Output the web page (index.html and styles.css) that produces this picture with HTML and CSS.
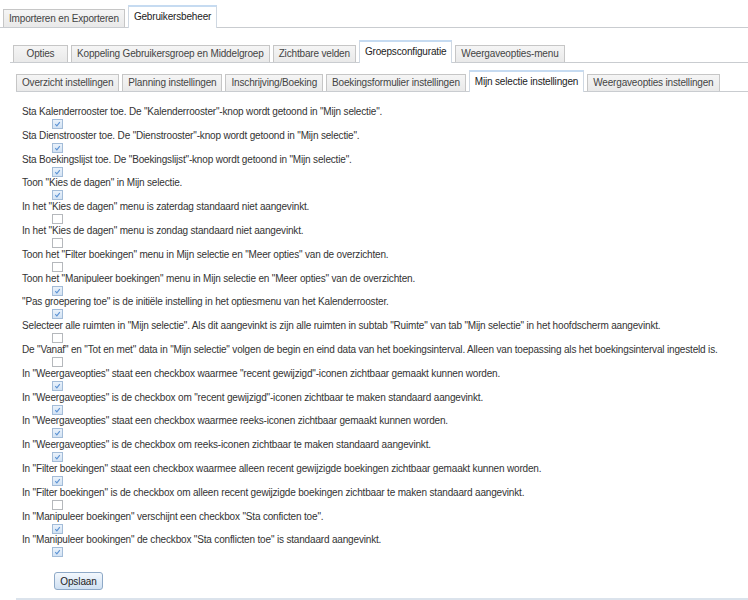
FILE: index.html
```html
<!DOCTYPE html>
<html lang="nl">
<head>
  <meta charset="UTF-8">
  <title>Gebruikersbeheer</title>
  <link rel="stylesheet" href="styles.css">
</head>
<body>

  <!-- Hoofdtabs -->
  <div class="tabs level1">
    <div class="tab">Importeren en Exporteren</div>
    <div class="tab active">Gebruikersbeheer</div>
  </div>

  <!-- Subtabs -->
  <div class="tabs level2">
    <div class="tab">Opties</div>
    <div class="tab">Koppeling Gebruikersgroep en Middelgroep</div>
    <div class="tab">Zichtbare velden</div>
    <div class="tab active">Groepsconfiguratie</div>
    <div class="tab">Weergaveopties-menu</div>
  </div>

  <div class="tabs level3">
    <div class="tab">Overzicht instellingen</div>
    <div class="tab">Planning instellingen</div>
    <div class="tab">Inschrijving/Boeking</div>
    <div class="tab">Boekingsformulier instellingen</div>
    <div class="tab active">Mijn selectie instellingen</div>
    <div class="tab">Weergaveopties instellingen</div>
  </div>

  <div class="panel">
    <div class="setting">
      <div class="label">Sta Kalenderrooster toe. De "Kalenderrooster"-knop wordt getoond in "Mijn selectie".</div>
      <span class="cb checked"><svg viewBox="0 0 10 10"><path d="M2.2 5.2 L4.2 7.3 L7.9 2.6"/></svg></span>
    </div>
    <div class="setting">
      <div class="label">Sta Dienstrooster toe. De "Dienstrooster"-knop wordt getoond in "Mijn selectie".</div>
      <span class="cb checked"><svg viewBox="0 0 10 10"><path d="M2.2 5.2 L4.2 7.3 L7.9 2.6"/></svg></span>
    </div>
    <div class="setting">
      <div class="label">Sta Boekingslijst toe. De "Boekingslijst"-knop wordt getoond in "Mijn selectie".</div>
      <span class="cb checked"><svg viewBox="0 0 10 10"><path d="M2.2 5.2 L4.2 7.3 L7.9 2.6"/></svg></span>
    </div>
    <div class="setting">
      <div class="label">Toon "Kies de dagen" in Mijn selectie.</div>
      <span class="cb checked"><svg viewBox="0 0 10 10"><path d="M2.2 5.2 L4.2 7.3 L7.9 2.6"/></svg></span>
    </div>
    <div class="setting">
      <div class="label">In het "Kies de dagen" menu is zaterdag standaard niet aangevinkt.</div>
      <span class="cb"></span>
    </div>
    <div class="setting">
      <div class="label">In het "Kies de dagen" menu is zondag standaard niet aangevinkt.</div>
      <span class="cb"></span>
    </div>
    <div class="setting">
      <div class="label">Toon het "Filter boekingen" menu in Mijn selectie en "Meer opties" van de overzichten.</div>
      <span class="cb"></span>
    </div>
    <div class="setting">
      <div class="label">Toon het "Manipuleer boekingen" menu in Mijn selectie en "Meer opties" van de overzichten.</div>
      <span class="cb checked"><svg viewBox="0 0 10 10"><path d="M2.2 5.2 L4.2 7.3 L7.9 2.6"/></svg></span>
    </div>
    <div class="setting">
      <div class="label">"Pas groepering toe" is de initiële instelling in het optiesmenu van het Kalenderrooster.</div>
      <span class="cb checked"><svg viewBox="0 0 10 10"><path d="M2.2 5.2 L4.2 7.3 L7.9 2.6"/></svg></span>
    </div>
    <div class="setting">
      <div class="label">Selecteer alle ruimten in "Mijn selectie". Als dit aangevinkt is zijn alle ruimten in subtab "Ruimte" van tab "Mijn selectie" in het hoofdscherm aangevinkt.</div>
      <span class="cb"></span>
    </div>
    <div class="setting">
      <div class="label">De "Vanaf" en "Tot en met" data in "Mijn selectie" volgen de begin en eind data van het boekingsinterval. Alleen van toepassing als het boekingsinterval ingesteld is.</div>
      <span class="cb"></span>
    </div>
    <div class="setting">
      <div class="label">In "Weergaveopties" staat een checkbox waarmee "recent gewijzigd"-iconen zichtbaar gemaakt kunnen worden.</div>
      <span class="cb checked"><svg viewBox="0 0 10 10"><path d="M2.2 5.2 L4.2 7.3 L7.9 2.6"/></svg></span>
    </div>
    <div class="setting">
      <div class="label">In "Weergaveopties" is de checkbox om "recent gewijzigd"-iconen zichtbaar te maken standaard aangevinkt.</div>
      <span class="cb checked"><svg viewBox="0 0 10 10"><path d="M2.2 5.2 L4.2 7.3 L7.9 2.6"/></svg></span>
    </div>
    <div class="setting">
      <div class="label">In "Weergaveopties" staat een checkbox waarmee reeks-iconen zichtbaar gemaakt kunnen worden.</div>
      <span class="cb checked"><svg viewBox="0 0 10 10"><path d="M2.2 5.2 L4.2 7.3 L7.9 2.6"/></svg></span>
    </div>
    <div class="setting">
      <div class="label">In "Weergaveopties" is de checkbox om reeks-iconen zichtbaar te maken standaard aangevinkt.</div>
      <span class="cb checked"><svg viewBox="0 0 10 10"><path d="M2.2 5.2 L4.2 7.3 L7.9 2.6"/></svg></span>
    </div>
    <div class="setting">
      <div class="label">In "Filter boekingen" staat een checkbox waarmee alleen recent gewijzigde boekingen zichtbaar gemaakt kunnen worden.</div>
      <span class="cb checked"><svg viewBox="0 0 10 10"><path d="M2.2 5.2 L4.2 7.3 L7.9 2.6"/></svg></span>
    </div>
    <div class="setting">
      <div class="label">In "Filter boekingen" is de checkbox om alleen recent gewijzigde boekingen zichtbaar te maken standaard aangevinkt.</div>
      <span class="cb"></span>
    </div>
    <div class="setting">
      <div class="label">In "Manipuleer boekingen" verschijnt een checkbox "Sta conficten toe".</div>
      <span class="cb checked"><svg viewBox="0 0 10 10"><path d="M2.2 5.2 L4.2 7.3 L7.9 2.6"/></svg></span>
    </div>
    <div class="setting">
      <div class="label">In "Manipuleer bookingen" de checkbox "Sta conflicten toe" is standaard aangevinkt.</div>
      <span class="cb checked"><svg viewBox="0 0 10 10"><path d="M2.2 5.2 L4.2 7.3 L7.9 2.6"/></svg></span>
    </div>

    <button class="save-button">Opslaan</button>
  </div>

</body>
</html>
```

FILE: styles.css
```css
body {
  font-family: "Liberation Sans", Arial, sans-serif;
  font-size: 10px;
  letter-spacing: -0.17px;
  color: #333;
  margin: 0;
  padding: 0;
  background-color: #fff;
}

/* Tab rows */
.tabs {
  display: flex;
  align-items: flex-end;
  border-bottom: 1px solid #c9ccd0;
}

.tab {
  border: 1px solid #c6c6c6;
  border-bottom: none;
  background: linear-gradient(#f5f5f5, #e9e9e9);
  color: #444;
  padding: 0 5px;
  line-height: 16px;
  margin-right: 3px;
  min-width: 43px;
  text-align: center;
  white-space: nowrap;
}

.tab.active {
  background: #fff;
  color: #222;
  border-color: #cfd8e2;
  border-top: 2px solid #c6dbf1;
  line-height: 20px;
  margin-bottom: -1px;
  padding-bottom: 1px;
}

.level1 {
  padding: 5px 0 0 3px;
  height: 22px;
}

.level1 .tab {
  line-height: 17px;
}

.level1 .tab.active {
  line-height: 20px;
}

.level2 {
  margin: 12px 0 0 10px;
  padding-left: 3px;
}

.level3 {
  margin: 7px 0 0 16px;
}

.level3 .tab.active {
  line-height: 19px;
}

/* Settings */
.panel {
  margin-left: 16px;
  padding: 13px 6px 8px;
  border-bottom: 2px solid #dbe3ec;
}

.setting {
  height: 23.8px;
}

.label {
  line-height: 13px;
  white-space: nowrap;
}

.cb {
  display: block;
  box-sizing: border-box;
  width: 11px;
  height: 10px;
  margin: 1px 0 0 30px;
  border: 1px solid #b5b8bc;
  background: #fff;
}

.cb.checked {
  border-color: #a3bcd8;
  background: linear-gradient(#eaf2fb, #d3e3f4);
}

.cb svg {
  display: block;
  width: 9px;
  height: 8px;
}

.cb svg path {
  fill: none;
  stroke: #5d93d3;
  stroke-width: 1.4;
}

.save-button {
  display: block;
  margin: 15px 0 0 32px;
  width: 49px;
  height: 18px;
  padding: 0;
  font-family: inherit;
  font-size: 10px;
  letter-spacing: -0.1px;
  color: #222;
  border: 1px solid #8ea9c7;
  border-radius: 3px;
  background: linear-gradient(#f3f8fd, #cfe0f2);
  cursor: pointer;
}
```
